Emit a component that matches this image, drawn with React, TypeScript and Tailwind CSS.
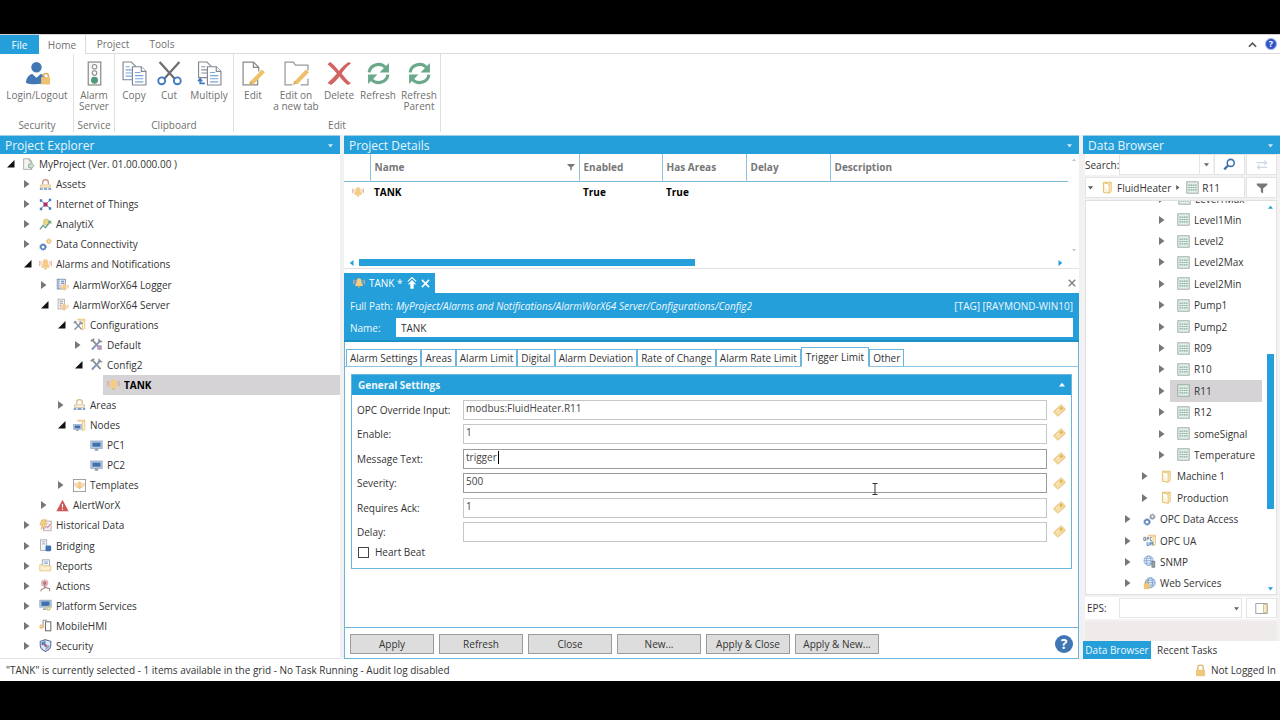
import React from 'react';
import clsx from 'clsx';

type TreeRow = { level: number; label: string; icon: string; state?: 'open' | 'closed'; selected?: boolean };

const projectTree: TreeRow[] = [
  { level: 0, label: 'MyProject (Ver. 01.00.000.00 )', icon: 'project', state: 'open' },
  { level: 1, label: 'Assets', icon: 'assets', state: 'closed' },
  { level: 1, label: 'Internet of Things', icon: 'iot', state: 'closed' },
  { level: 1, label: 'AnalytiX', icon: 'analytix', state: 'closed' },
  { level: 1, label: 'Data Connectivity', icon: 'gears', state: 'closed' },
  { level: 1, label: 'Alarms and Notifications', icon: 'alarm', state: 'open' },
  { level: 2, label: 'AlarmWorX64 Logger', icon: 'logger', state: 'closed' },
  { level: 2, label: 'AlarmWorX64 Server', icon: 'server', state: 'open' },
  { level: 3, label: 'Configurations', icon: 'configs', state: 'open' },
  { level: 4, label: 'Default', icon: 'toolsRed', state: 'closed' },
  { level: 4, label: 'Config2', icon: 'tools', state: 'open' },
  { level: 5, label: 'TANK', icon: 'alarm', selected: true },
  { level: 3, label: 'Areas', icon: 'areas', state: 'closed' },
  { level: 3, label: 'Nodes', icon: 'nodes', state: 'open' },
  { level: 4, label: 'PC1', icon: 'pc' },
  { level: 4, label: 'PC2', icon: 'pc' },
  { level: 3, label: 'Templates', icon: 'templates', state: 'closed' },
  { level: 2, label: 'AlertWorX', icon: 'alert', state: 'closed' },
  { level: 1, label: 'Historical Data', icon: 'history', state: 'closed' },
  { level: 1, label: 'Bridging', icon: 'bridging', state: 'closed' },
  { level: 1, label: 'Reports', icon: 'reports', state: 'closed' },
  { level: 1, label: 'Actions', icon: 'actions', state: 'closed' },
  { level: 1, label: 'Platform Services', icon: 'platform', state: 'closed' },
  { level: 1, label: 'MobileHMI', icon: 'mobile', state: 'closed' },
  { level: 1, label: 'Security', icon: 'shield', state: 'closed' },
];

const tagNames = ['Level1Min', 'Level2', 'Level2Max', 'Level2Min', 'Pump1', 'Pump2', 'R09', 'R10', 'R11', 'R12', 'someSignal', 'Temperature'];

const dataTree: TreeRow[] = [
  ...tagNames.map((label): TreeRow => ({ level: 2, label, icon: 'tag', state: 'closed', selected: label === 'R11' })),
  { level: 1, label: 'Machine 1', icon: 'folder', state: 'closed' },
  { level: 1, label: 'Production', icon: 'folder', state: 'closed' },
  { level: 0, label: 'OPC Data Access', icon: 'opcda', state: 'closed' },
  { level: 0, label: 'OPC UA', icon: 'opcua', state: 'closed' },
  { level: 0, label: 'SNMP', icon: 'snmp', state: 'closed' },
  { level: 0, label: 'Web Services', icon: 'web', state: 'closed' },
];

const formTabs = ['Alarm Settings', 'Areas', 'Alarm Limit', 'Digital', 'Alarm Deviation', 'Rate of Change', 'Alarm Rate Limit', 'Trigger Limit', 'Other'];

const fields = [
  { id: 'opc', label: 'OPC Override Input:', value: 'modbus:FluidHeater.R11' },
  { id: 'enable', label: 'Enable:', value: '1' },
  { id: 'message', label: 'Message Text:', value: 'trigger ', strong: true },
  { id: 'severity', label: 'Severity:', value: '500', strong: true },
  { id: 'ack', label: 'Requires Ack:', value: '1' },
  { id: 'delay', label: 'Delay:', value: '' },
];

const bell = (
  <g>
    <path d="M8 1.500c-2.600 0-3.400 2-3.400 4.500 0 2.500-.8 3.500-1.600 4.500v1.500h10v-1.500c-.8-1-1.600-2-1.600-4.500 0-2.500-.8-4.500-3.400-4.500z" fill="#f3cd85" />
    <path d="M6.500 12.500h3V14h-3z" fill="#e0b05c" />
    <path d="M3 4c-.8 1.500-.8 3.500 0 5M13 4c.8 1.500.8 3.500 0 5" fill="none" stroke="#e6a884" strokeWidth="1.200" />
    <path d="M1 3.500c-.8 2-.8 4.500 0 6.500M15 3.500c.8 2 .8 4.500 0 6.500" fill="none" stroke="#dfa6a0" strokeWidth="1.200" />
  </g>
);

const gear = (cx: number, cy: number, r: number, color: string) => (
  <g fill="none" stroke={color}>
    <circle cx={cx} cy={cy} r={r} strokeWidth="1.800" />
    <circle cx={cx} cy={cy} r={r + 1.3} strokeWidth="1" strokeDasharray="1.300 1.300" />
  </g>
);

const crossedTools = (
  <g fill="none" strokeLinecap="round">
    <path d="M3 2.500l9.500 10.500" stroke="#8a8f96" strokeWidth="2.200" />
    <path d="M1.500 3.500l3-2" stroke="#8a8f96" strokeWidth="2" />
    <path d="M12.500 3.500L3 13.500" stroke="#8398b4" strokeWidth="2.400" />
    <path d="M11 1.500v3h3.500" stroke="#8a8f96" strokeWidth="1.700" />
  </g>
);

const folderShape = <path d="M6 1.500h8.500V13l-3 1.500V4L9.500 2.500H6zM11.500 4l3-2" fill="#fdf3da" stroke="#e5bd6a" strokeWidth="1" />;

const monitor = (
  <g>
    <rect x="1" y="2.500" width="14" height="9" fill="#b9cbe0" stroke="#8ba3c0" />
    <rect x="3" y="4.500" width="10" height="5" fill="#3f72ad" />
    <path d="M5.500 14.500h5l-1-3h-3z" fill="#9aa0a8" />
  </g>
);

const icons: Record<string, React.ReactNode> = {
  alarm: bell,
  project: (
    <g fill="#f4f5f2" stroke="#9aa09a">
      <path d="M2 1h7l3 3v10H2z" />
      <path d="M9 1v3h3" fill="none" />
      <path d="M8 7.500h3V5.500l4 4-4 4v-2H8z" fill="#cfe0cf" stroke="#8aa88e" />
    </g>
  ),
  assets: (
    <g fill="none">
      <path d="M4.500 8V5.500A3.500 3.500 0 0 1 11.500 5.500V8" stroke="#c88a7c" strokeWidth="1.500" />
      <path d="M2 8.500h12v3H2z" fill="#fbeecd" stroke="#d9bb80" />
      <path d="M1 13.500h3.500m1.500 0h4m1.500 0H15" stroke="#5f8cc4" strokeWidth="2" />
    </g>
  ),
  areas: (
    <g fill="none">
      <path d="M4.500 8V5.500A3.500 3.500 0 0 1 11.500 5.500V8" stroke="#d9bb80" strokeWidth="1.500" />
      <path d="M2 8.500h12v3H2z" fill="#fff9ea" stroke="#c5b088" />
      <path d="M1 13.500h3m1.500 0h5m1.500 0H15" stroke="#5f7fb4" strokeWidth="2" />
    </g>
  ),
  iot: (
    <g>
      <path d="M2 3l6 5 6-6M8 8l6 5M2 13l6-5" fill="none" stroke="#6a88c0" strokeWidth="1.200" />
      <rect x="5.500" y="5.500" width="5" height="5" fill="#a83264" />
      <path d="M1 1.500h3v3H1zM12 1h3v3h-3zM12 11.500h3v3h-3zM1 12h3v3H1z" fill="#4a78bd" />
    </g>
  ),
  analytix: (
    <g fill="none">
      <circle cx="9" cy="5" r="3.500" fill="#ecd88c" stroke="#cdb45c" />
      <path d="M1 14l4-5 3 3 6-8" stroke="#6aa286" strokeWidth="1.600" />
      <path d="M11 4h3.500v3" stroke="#6aa286" strokeWidth="1.300" />
    </g>
  ),
  gears: (
    <g>
      {gear(5, 11, 2.8, '#4a78bd')}
      {gear(12, 4, 1.9, '#ecc27a')}
    </g>
  ),
  logger: (
    <g>
      <rect x="1.500" y="1.500" width="10" height="12" fill="#f3f6fa" stroke="#6c86a8" />
      <path d="M3.500 1.500v12" stroke="#6c86a8" />
      <path d="M6 4h4M6 6.500h4" stroke="#4a78bd" strokeWidth="1.300" />
      <g transform="translate(5 6) scale(.65)">{bell}</g>
    </g>
  ),
  server: (
    <g>
      <rect x="2.500" y="1.500" width="8" height="12" fill="#f4f4f4" stroke="#a9a9a9" />
      <path d="M4.500 4h4M4.500 6.500h4M4.500 9h2" stroke="#8a8a8a" />
      <g transform="translate(5 6) scale(.65)">{bell}</g>
    </g>
  ),
  configs: (
    <g>
      {folderShape}
      <g transform="translate(0 3) scale(.8)">{crossedTools}</g>
    </g>
  ),
  tools: crossedTools,
  toolsRed: (
    <g>
      {crossedTools}
      <rect x="9" y="9" width="5.500" height="5.500" fill="#b59ac0" />
    </g>
  ),
  nodes: (
    <g>
      {folderShape}
      <g transform="translate(0 5) scale(.68)">{monitor}</g>
    </g>
  ),
  pc: monitor,
  templates: (
    <g>
      <rect x=".5" y=".5" width="15" height="15" fill="#fff" stroke="#8f8f8f" />
      <g transform="translate(2 2) scale(.75)">{bell}</g>
    </g>
  ),
  alert: (
    <g>
      <path d="M8 1l7.500 14H.5z" fill="#cf5757" />
      <path d="M8 6v4.500M8 12v1.500" stroke="#fff" strokeWidth="1.400" />
    </g>
  ),
  history: (
    <g>
      <rect x="5.500" y="2.500" width="9.500" height="12" fill="#f1e9ee" stroke="#b7a7ae" />
      <path d="M6 12l3-3 2 1.500L14 6" stroke="#b45a6a" fill="none" />
      <path d="M3.500 1h6L7 5.500h3L2.500 13l1.500-5.500H1z" fill="#f3cf84" stroke="#d9a94e" strokeWidth=".7" />
    </g>
  ),
  bridging: (
    <g>
      <rect x="2" y="1" width="7.500" height="13" fill="#f2f4f6" stroke="#9aa3ad" />
      <path d="M4 3.500h3.500M4 6h3.500" stroke="#8d97a3" />
      <rect x="8" y="8" width="7" height="7" rx="1.500" fill="#3f72b5" />
    </g>
  ),
  reports: (
    <g>
      <path d="M4 1h9v8H4z" fill="#f4f8fc" stroke="#8c9bb0" />
      <path d="M6 3.500h5M6 5.500h5" stroke="#7f9cc4" />
      <path d="M1 7h3l1 1.500h9.500v6H1z" fill="#fdf0cf" stroke="#e2bf75" />
    </g>
  ),
  actions: (
    <g>
      <circle cx="7" cy="5" r="4.500" fill="#e3b3b8" />
      <circle cx="7" cy="5" r="2" fill="#b8707c" />
      <path d="M7 5v6l-4 2M7 10l6 2v3M3 13l-1 2" stroke="#a98a90" strokeWidth="1.500" fill="none" />
    </g>
  ),
  platform: (
    <g>
      <rect x="1" y="1.500" width="14" height="8.500" fill="#b9cbe0" stroke="#8ba3c0" />
      <rect x="3" y="3" width="10" height="5.500" fill="#3f72ad" />
      <path d="M5 12.500h4" stroke="#8ba3c0" strokeWidth="2" />
      {gear(11.5, 11.5, 1.7, '#d9c583')}
    </g>
  ),
  mobile: (
    <g>
      <rect x="8" y="3.500" width="6.500" height="11" fill="#fff" stroke="#6f6f6f" strokeWidth="1.300" />
      <path d="M5 1.500h5M5 1.500v9" stroke="#8b8b8b" strokeWidth="1.200" />
      {gear(3, 9.5, 1.5, '#ecc27a')}
    </g>
  ),
  shield: (
    <g>
      <path d="M8 .8l6.500 2v5c0 3.500-3 6-6.500 7.500C4.500 13.800 1.500 11.300 1.500 7.800v-5z" fill="#dfe8f4" stroke="#5a7296" strokeWidth="1.300" />
      <path d="M8 2.500v5.300H3V4z" fill="#5d84ba" />
      <path d="M8 7.800h5c0 2.700-2.200 4.400-5 5.700z" fill="#8ba7cf" />
      <circle cx="8" cy="8" r="1.500" fill="#c4475c" />
    </g>
  ),
  tag: (
    <g>
      <rect x="1" y="1" width="14" height="14" fill="#e3efe9" stroke="#8f9f97" />
      <path d="M3 5h10M3 8h10M3 11h10" stroke="#86ab9a" strokeWidth="1.500" strokeDasharray="2 .7" />
    </g>
  ),
  folder: <path d="M3 1.500h9.500V13l-2.500 2V4L3 2v12l7 1M10 4l2.500-2" fill="#fdf3da" stroke="#e5bd6a" strokeWidth="1.200" />,
  opcda: (
    <g>
      {gear(5, 11, 2.8, '#5581b8')}
      {gear(11.5, 4.5, 2.2, '#8d97a3')}
    </g>
  ),
  opcua: (
    <g>
      <g transform="translate(1 0)">{folderShape}</g>
      <path d="M1 4v4h2V4zM5 8V4h2v2H5M11 4.500H9v3.500h2" fill="none" stroke="#6d7680" />
      <path d="M5 10v4h2.500v-4M9.500 14v-4H12v4M9.500 12H12" fill="none" stroke="#4f86c2" strokeWidth="1.200" />
    </g>
  ),
  snmp: (
    <g fill="none" stroke="#7ea3d3">
      <circle cx="7" cy="7" r="5.800" fill="#e8f0fa" />
      <ellipse cx="7" cy="7" rx="2.700" ry="5.800" />
      <path d="M1.300 7h11.400M2.200 4h9.600M2.200 10h9.600" />
      <rect x="11" y="8" width="3.500" height="7" fill="#9ba1a8" stroke="#767c84" />
    </g>
  ),
  web: (
    <g fill="none" stroke="#6f98cf">
      <circle cx="9" cy="7" r="6" fill="#e8f0fa" />
      <ellipse cx="9" cy="7" rx="2.700" ry="6" />
      <path d="M3 7h12M4 4h10M4 10h10" />
      <path d="M2.500 9V7a2 2 0 0 1 4 0v2" stroke="#d9a94e" strokeWidth="1.200" />
      <rect x="1" y="8.500" width="7" height="6.500" fill="#f1c477" stroke="none" />
    </g>
  ),
  lock: (
    <g>
      <path d="M4.500 8V5a3.500 3.500 0 0 1 7 0v3" fill="none" stroke="#dcb871" strokeWidth="1.600" />
      <rect x="2.500" y="7" width="11" height="8" fill="#efc87e" />
    </g>
  ),
  ticket: (
    <g transform="rotate(-42 8 8)">
      <rect x="1.500" y="4" width="13" height="8" rx="1" fill="#f3d493" stroke="#e3bf78" strokeWidth=".8" />
      <path d="M3.500 6.500h5M3.500 9.500h5" stroke="#fff" strokeWidth=".9" />
      <rect x="10" y="6" width="2.500" height="2.500" fill="#d9a74f" />
    </g>
  ),
  search: (
    <g fill="none" stroke="#3f72ad">
      <circle cx="9.500" cy="6" r="4.300" strokeWidth="1.900" />
      <path d="M6.300 9.200L1.500 14" strokeWidth="2.800" />
    </g>
  ),
  swap: (
    <g fill="none" stroke="#bcc9d9" strokeWidth="1.300">
      <path d="M1 5h13M11 2l3.500 3L11 8M15 11H2M5 8l-3.500 3L5 14" />
    </g>
  ),
  funnel: <path d="M1 2h14v2L9.500 8.500V15l-3-1.500v-5L1 4z" fill="#777" />,
  panel: (
    <g>
      <rect x="1" y="2" width="14" height="12" fill="#fff" stroke="#8a9096" />
      <path d="M10.500 3h4v10h-4z" fill="#f5eccb" stroke="#c9b77c" />
    </g>
  ),
};

function Icon({ name, className = 'size-[13px]' }: { name: string; className?: string }) {
  return (
    <svg viewBox="0 0 16 16" className={clsx('shrink-0', className)} aria-hidden="true">
      {icons[name]}
    </svg>
  );
}

function Triangle({ dir, className = 'size-[6px]' }: { dir: 'down' | 'up' | 'left' | 'right'; className?: string }) {
  const paths = { down: 'M0 2h8L4 7z', up: 'M0 6h8L4 1z', left: 'M6 0v8L1 4z', right: 'M2 0v8l5-4z' };
  return (
    <svg viewBox="0 0 8 8" className={clsx('shrink-0', className)} aria-hidden="true">
      <path d={paths[dir]} fill="currentColor" />
    </svg>
  );
}

function Expander({ state }: { state?: 'open' | 'closed' }) {
  return (
    <span className="w-2 shrink-0">
      {state && (
        <svg viewBox="0 0 8 8" className="size-2" aria-hidden="true">
          {state === 'open' ? <path d="M0 7.500h7.500V0z" fill="#111" /> : <path d="M0 0v8l5.500-4z" fill="#777" />}
        </svg>
      )}
    </span>
  );
}

type TreeItemProps = { row: TreeRow; base: number; boldSelected?: boolean; iconPad?: string };

function TreeItem({ row, base, boldSelected = false, iconPad = 'pl-1' }: TreeItemProps) {
  return (
    <li className="flex flex-1 items-stretch" style={{ paddingLeft: base + row.level * 17 }}>
      <button className="flex flex-1 items-center text-left">
        <Expander state={row.state} />
        <span
          className={clsx(
            'ml-[3px] flex flex-1 items-center gap-1 self-stretch whitespace-nowrap',
            iconPad,
            row.selected && 'bg-[#d5d3d5]',
            row.selected && boldSelected && 'font-bold text-black',
          )}
        >
          <Icon name={row.icon} />
          {row.label}
        </span>
      </button>
    </li>
  );
}

function PanelHeader({ title }: { title: string }) {
  return (
    <div className="flex h-[19px] shrink-0 items-center justify-between border-t border-[#9fd0ea] bg-[#249fda] px-[5px]">
      <h2 className="text-[12px] leading-[17px] text-[#e9f6fd]">{title}</h2>
      <Triangle dir="down" className="mr-0.5 size-[5px] text-[#cfeaf8]" />
    </div>
  );
}

const bigIcons: Record<string, React.ReactNode> = {
  login: (
    <g>
      <circle cx="11" cy="6" r="5" fill="#4377b4" />
      <path d="M1 21c0-5 3-8 6-8.500l4 3.500 4-3.500c3 .5 5 3 5 5.500v2c-4 3-15 3-19 1z" fill="#4377b4" />
      <path d="M17.500 16v-1.500a2.500 2.500 0 0 1 5 0V16" fill="none" stroke="#e0b05c" strokeWidth="1.500" />
      <rect x="15.500" y="15.500" width="8.500" height="7" fill="#f0c170" />
    </g>
  ),
  alarmServer: (
    <g fill="none" stroke="#8d8d8d">
      <rect x="6" y="1" width="12" height="22" fill="#fafafa" strokeWidth="1.200" />
      <circle cx="12" cy="5.500" r="2.200" />
      <circle cx="12" cy="11.500" r="2.200" />
      <circle cx="12" cy="18.500" r="2.800" fill="#4f9a76" stroke="#4f9a76" />
    </g>
  ),
  copy: (
    <g fill="#fff" stroke="#7f8790" strokeWidth="1.100">
      <path d="M1 1h8l4 4v13H1z" />
      <path d="M3.500 5.500h4M3.500 8.500h6M3.500 11.500h6M3.500 14.500h6" stroke="#78a5dc" />
      <path d="M10 5.500h8.500l4.500 4.500v13H10z" />
      <path d="M18.500 5.500V10H23" />
      <path d="M12.500 11h5M12.500 14h8M12.500 17h8M12.500 20h8" stroke="#78a5dc" />
    </g>
  ),
  cut: (
    <g fill="none">
      <path d="M2.500 1L17 17M21.500 1L7 17" stroke="#6f6f6f" strokeWidth="2.200" />
      <circle cx="4.500" cy="19" r="3.300" stroke="#3f7ac0" strokeWidth="1.800" />
      <circle cx="19.500" cy="19" r="3.300" stroke="#3f7ac0" strokeWidth="1.800" />
    </g>
  ),
  multiply: (
    <g fill="#fff" stroke="#7f8790" strokeWidth="1.100">
      <path d="M1.500 1h8l4 4v11h-12z" />
      <path d="M4 5.500h4M4 8.500h6M4 11.500h6" stroke="#8a9098" />
      <path d="M10 5.500h8.500l4.500 4.500v13H10z" />
      <path d="M18.500 5.500V10H23" />
      <path d="M12.500 11h5M12.500 14h8M12.500 17h8M12.500 20h8" stroke="#78a5dc" />
      <path d="M3 17.500v4h4.500M1 19.500l2-2.500 2 2.500" fill="none" stroke="#3f7ac0" strokeWidth="1.500" />
    </g>
  ),
  edit: (
    <g fill="none" stroke="#8a8a8a" strokeWidth="1.200">
      <path d="M16 15v8H2V1h10l5 5v4M12 1v5h5" />
      <path d="M21.500 9.500L10.500 21" stroke="#efbf6a" strokeWidth="4" />
      <path d="M9 19l-1.500 4 4-1.500z" fill="#d9a95a" stroke="none" />
    </g>
  ),
  editTab: (
    <g fill="none" stroke="#9a9a9a" strokeWidth="1.200">
      <path d="M8 23H1V1h8l2 3h12v5M23 17v6h-7" />
      <path d="M22.500 9.500L11.500 21" stroke="#efbf6a" strokeWidth="4" />
      <path d="M10 19l-1.500 4 4-1.500z" fill="#d9a95a" stroke="none" />
    </g>
  ),
  delete: <path d="M3 1c3 2 6 5.500 8.500 8.500C14 6 18 2.500 21 1l2 1.500c-4 3-6.500 6-9 9.500 2.500 3 4.500 6 9 9.500L20 23c-3-2-5.500-5-8-8.200C9.500 18 6.500 21 4 23l-3.500-2C4 18 7 15 9.500 12 6.500 8.500 4 6 .5 3z" fill="#d36363" />,
  refresh: (
    <g fill="none" stroke="#6aa88a" strokeWidth="3">
      <path d="M3 11A9 8.500 0 0 1 18.500 6" />
      <path d="M21 13A9 8.500 0 0 1 5.500 18" />
      <path d="M22 2v9h-9zM2 22v-9h9z" fill="#6aa88a" stroke="none" />
    </g>
  ),
};

type RibbonItem = { icon: string; lines: string[]; width: string };

const ribbon: { title: string; items: RibbonItem[] }[] = [
  { title: 'Security', items: [{ icon: 'login', lines: ['Login/Logout'], width: 'w-[72px]' }] },
  { title: 'Service', items: [{ icon: 'alarmServer', lines: ['Alarm', 'Server'], width: 'w-10' }] },
  {
    title: 'Clipboard',
    items: [
      { icon: 'copy', lines: ['Copy'], width: 'w-[38px]' },
      { icon: 'cut', lines: ['Cut'], width: 'w-8' },
      { icon: 'multiply', lines: ['Multiply'], width: 'w-12' },
    ],
  },
  {
    title: 'Edit',
    items: [
      { icon: 'edit', lines: ['Edit'], width: 'w-[38px]' },
      { icon: 'editTab', lines: ['Edit on', 'a new tab'], width: 'w-12' },
      { icon: 'delete', lines: ['Delete'], width: 'w-[38px]' },
      { icon: 'refresh', lines: ['Refresh'], width: 'w-10' },
      { icon: 'refresh', lines: ['Refresh', 'Parent'], width: 'w-[42px]' },
    ],
  },
];

function Ribbon() {
  return (
    <header className="shrink-0 bg-white text-[#6f6f6f]">
      <nav className="flex h-5 items-stretch border-t border-[#d0d0d0]">
        <button className="w-[39px] bg-[#249fda] text-white">File</button>
        <button className="w-[47px] border-r border-[#dcdcdc]">Home</button>
        <button className="w-[54px] border-b border-[#dcdcdc]">Project</button>
        <button className="w-11 border-b border-[#dcdcdc]">Tools</button>
        <div className="flex flex-1 items-center justify-end gap-2 border-b border-[#dcdcdc] pr-[3px]">
          <button aria-label="Collapse ribbon">
            <svg viewBox="0 0 10 10" className="size-[9px]"><path d="M1 7.500l4-4 4 4" fill="none" stroke="#555" strokeWidth="1.800" /></svg>
          </button>
          <button aria-label="Help" className="size-3 rounded-full border border-[#9db3e8] bg-[#2f55c8] text-[9px] leading-[10px] font-bold text-white">?</button>
        </div>
      </nav>
      <div className="flex h-[81px] pl-px">
        {ribbon.map((group) => (
          <section key={group.title} className="mb-[3px] flex flex-col justify-between border-r border-[#dfdfdf] pt-[7px]">
            <div className="flex items-start">
              {group.items.map((item, i) => (
                <button key={i} className={clsx('flex flex-col items-center leading-[11px] whitespace-nowrap', item.width)}>
                  <svg viewBox="0 0 24 24" className="mb-1 size-[25px]" aria-hidden="true">{bigIcons[item.icon]}</svg>
                  {item.lines.map((line) => (
                    <span key={line}>{line}</span>
                  ))}
                </button>
              ))}
            </div>
            <h3 className="text-center leading-[14px]">{group.title}</h3>
          </section>
        ))}
      </div>
    </header>
  );
}

function DetailsGrid() {
  return (
    <section className="flex h-[134px] shrink-0 flex-col border-b border-[#e2e2e2] bg-white">
      <PanelHeader title="Project Details" />
      <div className="flex min-h-0 flex-1">
        <div className="flex flex-1 flex-col">
          <table className="w-full table-fixed border-collapse text-left">
            <thead className="text-[#777]">
              <tr className="h-[27px] border-b border-[#7fb9d8]">
                <th className="w-[26px]" />
                <th className="w-[209px] border-l border-[#8cc3e0] px-1 font-bold">
                  <span className="flex items-center justify-between">
                    Name
                    <Icon name="funnel" className="size-2" />
                  </span>
                </th>
                <th className="w-[83px] border-l border-[#8cc3e0] px-1 font-bold">Enabled</th>
                <th className="w-[84px] border-l border-[#8cc3e0] px-1 font-bold">Has Areas</th>
                <th className="w-[84px] border-l border-[#8cc3e0] px-1 font-bold">Delay</th>
                <th className="border-l border-[#8cc3e0] px-1 font-bold">Description</th>
              </tr>
            </thead>
            <tbody className="font-bold text-black">
              <tr className="h-[22px]">
                <td className="pl-2"><Icon name="alarm" className="size-3" /></td>
                <td className="px-1">TANK</td>
                <td className="px-1">True</td>
                <td className="px-1">True</td>
                <td />
                <td />
              </tr>
            </tbody>
          </table>
          <div className="mt-auto flex h-[11px] items-center justify-between px-[5px] text-[#249fda]">
            <Triangle dir="left" />
            <div className="mr-auto ml-1 h-[7px] w-[47%] bg-[#249fda]" />
            <Triangle dir="right" />
          </div>
        </div>
        <div className="flex w-[11px] flex-col items-center justify-between pt-1 pb-4 text-[#c4c4c4]">
          <Triangle dir="up" className="size-1" />
          <Triangle dir="down" className="size-1" />
        </div>
      </div>
    </section>
  );
}

function SettingsForm() {
  return (
    <section className="flex flex-1 flex-col">
      <div className="flex h-5 items-center justify-between bg-white pr-[3px]">
        <div className="flex h-full w-[91px] items-center gap-1 bg-[#249fda] pl-[9px] text-white">
          <Icon name="alarm" className="size-3" />
          <span>TANK *</span>
          <svg viewBox="0 0 12 14" className="h-3 w-[10px]" aria-hidden="true">
            <path d="M6 3.500l5 5H8V14H4V8.500H1z" fill="#fff" />
            <path d="M1 5l5-4.500L11 5" fill="none" stroke="#fff" strokeWidth="1.400" />
          </svg>
          <button aria-label="Close tab">
            <svg viewBox="0 0 10 10" className="size-[9px]"><path d="M1 1l8 8M9 1L1 9" stroke="#fff" strokeWidth="1.800" /></svg>
          </button>
        </div>
        <button aria-label="Close editor">
          <svg viewBox="0 0 10 10" className="size-2"><path d="M1 1l8 8M9 1L1 9" stroke="#808080" strokeWidth="1.800" /></svg>
        </button>
      </div>
      <div className="flex flex-col gap-[3px] border-b-2 border-[#1b8fc6] bg-[#249fda] px-[6px] pt-1 pb-[3px] text-[#f1f9fd]">
        <div className="flex h-[18px] items-center">
          <span className="w-[46px]">Full Path:</span>
          <em className="flex-1">MyProject/Alarms and Notifications/AlarmWorX64 Server/Configurations/Config2</em>
          <span>[TAG] [RAYMOND-WIN10]</span>
        </div>
        <div className="flex h-[19px] items-center">
          <label htmlFor="name" className="w-[46px]">Name:</label>
          <input id="name" defaultValue="TANK" className="h-full min-w-0 flex-1 bg-white px-[5px] text-[#333]" />
        </div>
      </div>
      <div className="flex flex-1 flex-col border border-t-0 border-[#6cb5dc] bg-white">
        <div role="tablist" className="mt-[6px] flex h-[19px] items-end border-b border-[#8cc3e0] pl-px">
          {formTabs.map((tab) => (
            <button
              key={tab}
              role="tab"
              aria-selected={tab === 'Trigger Limit'}
              className={clsx(
                'border border-[#6cb5dc] whitespace-nowrap',
                tab === 'Trigger Limit' ? '-mb-px h-5 border-b-white bg-white px-1 leading-[17px]' : 'h-[17px] border-b-0 px-[3px] leading-[15px]',
              )}
            >
              {tab}
            </button>
          ))}
        </div>
        <div className="mx-[6px] mt-[7px] border border-[#6cb5dc]">
          <div className="flex h-5 items-center justify-between bg-[#249fda] px-[6px] font-bold text-[#eef8fd]">
            <h3>General Settings</h3>
            <Triangle dir="up" className="size-[6px] text-white" />
          </div>
          <div className="mt-[5px] flex h-[142px] flex-col justify-between px-[5px]">
            {fields.map((field) => (
              <div key={field.id} className="flex h-5 items-center">
                <label htmlFor={field.id} className="w-[106px] shrink-0">{field.label}</label>
                <div className="relative h-full flex-1">
                  <input
                    id={field.id}
                    defaultValue={field.value}
                    className={clsx('block h-full w-full border px-[2px] pb-1 text-[#444]', field.strong ? 'border-[#9a9a9a]' : 'border-[#c6c6c6]')}
                  />
                  {field.id === 'message' && <span className="absolute top-[2px] left-[35px] h-[13px] w-px bg-black" />}
                  {field.id === 'severity' && (
                    <svg viewBox="0 0 6 12" className="absolute top-[10px] right-[169px] h-3 w-[6px]" aria-hidden="true">
                      <path d="M.5 .5h5M3 .5v11M.5 11.500h5" fill="none" stroke="#333" />
                    </svg>
                  )}
                </div>
                <button aria-label={`Pick tag for ${field.label}`} className="ml-[6px]"><Icon name="ticket" /></button>
              </div>
            ))}
          </div>
          <label className="flex items-center gap-[6px] px-[6px] pt-[3px] pb-[9px]">
            <input type="checkbox" className="size-[11px] appearance-none border border-[#444] bg-white" />
            Heart Beat
          </label>
        </div>
        <div className="mt-auto flex h-[31px] items-center gap-[5px] border-t border-[#6cb5dc] px-[5px] pt-0.5">
          {['Apply', 'Refresh', 'Close', 'New...', 'Apply & Close', 'Apply & New...'].map((label) => (
            <button key={label} className="h-5 w-[84px] border border-[#9b9b9b] bg-[#dddddd] leading-[18px] text-[#333]">{label}</button>
          ))}
          <button aria-label="Help" className="ml-auto size-[18px] rounded-full bg-[#3f76b3] text-[14px] leading-[18px] font-bold text-white">?</button>
        </div>
      </div>
    </section>
  );
}

function DataBrowser() {
  return (
    <aside className="flex w-[197px] shrink-0 flex-col bg-[#efecec]">
      <PanelHeader title="Data Browser" />
      <div className="flex flex-1 flex-col gap-0.5 bg-[#f3f1f1] pr-[3px] pl-[2px]">
        <div className="flex h-[21px]">
          <label htmlFor="search" className="flex w-[34px] items-center bg-white">Search:</label>
          <input id="search" className="min-w-0 flex-1 border border-[#e4e4e4] bg-white px-1" />
          <button aria-label="Search history" className="flex w-[13px] items-center justify-center border-y border-[#e4e4e4] bg-white text-[#666]"><Triangle dir="down" className="size-[5px]" /></button>
          <button aria-label="Search" className="mx-px flex w-[31px] items-center justify-center border border-[#e4e4e4] bg-white"><Icon name="search" /></button>
          <button aria-label="Swap" className="flex w-[31px] items-center justify-center border border-[#e4e4e4] bg-white"><Icon name="swap" className="size-3" /></button>
        </div>
        <div className="flex h-[21px] gap-px">
          <div className="flex flex-1 items-center border border-[#e4e4e4] bg-white pl-[2px] text-[#555]">
            <Triangle dir="down" className="size-[5px]" />
            <button className="ml-2 flex items-center gap-[3px] text-[#333]"><Icon name="folder" />FluidHeater</button>
            <Triangle dir="right" className="ml-1 size-[5px]" />
            <button className="ml-[6px] flex items-center gap-[3px] text-[#333]"><Icon name="tag" />R11</button>
          </div>
          <button aria-label="Filter" className="flex w-[31px] items-center justify-center border border-[#e4e4e4] bg-white"><Icon name="funnel" className="size-3" /></button>
        </div>
        <div className="flex flex-1 border border-[#e0e0e0] bg-white">
          <ul className="flex flex-1 flex-col">
            <li className="flex h-2 shrink-0 items-end overflow-hidden pl-[73px]">
              <button className="flex h-[21px] shrink-0 items-center gap-1">
                <Expander state="closed" />
                <span className="ml-[3px] flex items-center gap-1 pl-1"><Icon name="tag" />Level1Max</span>
              </button>
            </li>
            {dataTree.map((row) => (
              <TreeItem key={row.label} row={row} base={39} iconPad="pl-[7px]" />
            ))}
          </ul>
          <div className="ml-[3px] flex w-[11px] shrink-0 flex-col items-center pt-[4px] pb-[3px] text-[#249fda]">
            <Triangle dir="up" className="size-[5px]" />
            <div className="flex-[144]" />
            <div className="w-[7px] flex-[155] bg-[#249fda]" />
            <div className="flex-[77]" />
            <Triangle dir="down" className="size-[5px]" />
          </div>
        </div>
        <div className="flex h-[22px] items-center bg-white pl-[2px]">
          <label htmlFor="eps" className="w-8">EPS:</label>
          <div className="relative h-5 flex-1">
            <select id="eps" className="h-full w-full appearance-none border border-[#e4e4e4] bg-white" />
            <Triangle dir="down" className="pointer-events-none absolute top-[8px] right-[3px] size-[5px] text-[#666]" />
          </div>
          <button aria-label="Show panel" className="ml-1 flex h-5 w-[31px] items-center justify-center border border-[#e4e4e4] bg-white"><Icon name="panel" /></button>
        </div>
        <div className="h-5 bg-[#efebeb]" />
      </div>
      <div className="flex h-[18px] bg-white">
        <button className="w-[68px] bg-[#249fda] whitespace-nowrap text-[#eef8fd]">Data Browser</button>
        <button className="px-[6px]">Recent Tasks</button>
      </div>
    </aside>
  );
}

export default function App() {
  return (
    <div className="flex min-h-screen flex-col bg-black pt-[34px] pb-[39px] font-['Open_Sans','Noto_Sans',sans-serif] text-[10px] leading-[14px] text-[#333]">
      <Ribbon />
      <main className="flex flex-1 gap-1 bg-[#f1f1f1]">
        <aside className="flex w-[340px] shrink-0 flex-col border-b border-[#e2e2e2] bg-white">
          <PanelHeader title="Project Explorer" />
          <ul className="flex flex-1 flex-col pb-[2px]">
            {projectTree.map((row) => (
              <TreeItem key={row.label} row={row} base={7} boldSelected />
            ))}
          </ul>
        </aside>
        <div className="flex min-w-0 flex-1 flex-col gap-1 bg-white">
          <DetailsGrid />
          <SettingsForm />
        </div>
        <DataBrowser />
      </main>
      <footer className="flex h-[22px] shrink-0 items-center justify-between bg-white pr-1 pl-[6px]">
        <span>"TANK" is currently selected - 1 items available in the grid - No Task Running - Audit log disabled</span>
        <span className="flex items-center gap-1"><Icon name="lock" />Not Logged In</span>
      </footer>
    </div>
  );
}
